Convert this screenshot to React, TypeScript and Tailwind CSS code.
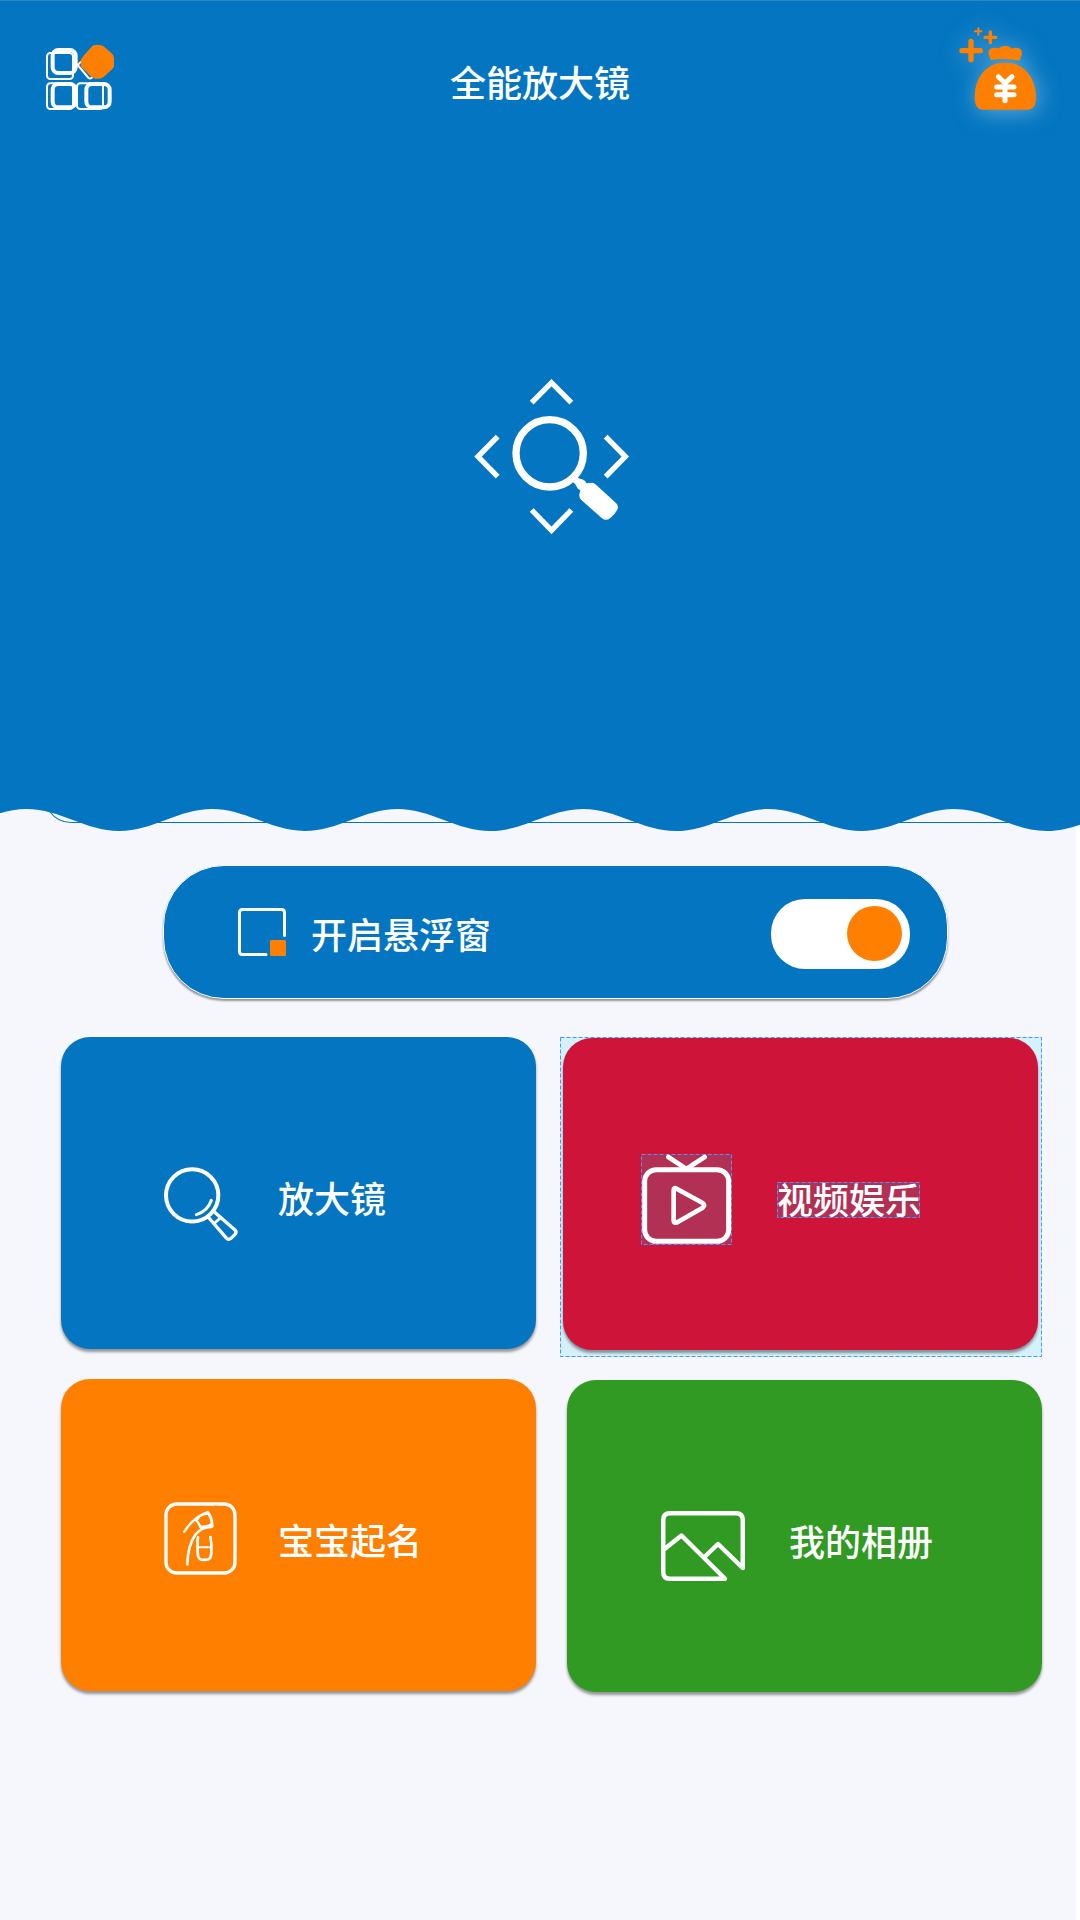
import type { ReactNode } from "react";

function wavePath() {
  const period = 185.5;
  const half = period / 2;
  const c = half * 0.3642;
  let x = 26.5 - period;
  let d = `M${x} 0 V3`;
  for (let i = 0; i < 14; i++) {
    const from = i % 2 === 0 ? 3 : 25;
    const to = i % 2 === 0 ? 25 : 3;
    d += ` C${x + c} ${from} ${x + half - c} ${to} ${x + half} ${to}`;
    x += half;
  }
  return `${d} V0 Z`;
}

function MenuIcon() {
  return (
    <svg className="size-[100px]" viewBox="0 0 300 300" fill="none" stroke="#fff">
      <g strokeWidth="6">
        <rect x="51" y="69" width="78" height="78" rx="10" />
        <rect x="51" y="160" width="78" height="77" rx="10" />
        <rect x="141" y="160" width="78" height="77" rx="10" />
        <path d="M154 94 L143 105 L175 143 Q181 148 187 142 L196 133" />
      </g>
      <g strokeWidth="12">
        <rect x="68" y="60" width="69" height="69" rx="17" />
        <rect x="68" y="162" width="69" height="70" rx="17" />
        <rect x="169" y="162" width="70" height="70" rx="17" />
      </g>
      <path
        d="M191 46 Q202 43 214 46 Q222 49 229 56 L245 70 Q252 76 252 84 L252 107 Q252 112 246 118 L222 140 Q215 146 206 146 L197 146 Q189 146 182 139 L160 117 Q152 110 152 102 L152 94 Q153 86 160 78 L181 55 Q186 49 191 46Z"
        fill="#ff8000"
        stroke="none"
      />
    </svg>
  );
}

function MoneyBagIcon() {
  return (
    <svg
      className="size-[120px] overflow-visible drop-shadow-[2px_2px_11px_rgba(190,225,245,0.5)]"
      viewBox="0 0 360 360"
      fill="none"
      strokeLinecap="round"
    >
      <g stroke="#ff8000">
        <path d="M66 122H121M93 94V149" strokeWidth="16" />
        <path d="M135 82H167M151 66V98" strokeWidth="10" />
        <path d="M105 64H124M115 55V74" strokeWidth="6" />
      </g>
      <g fill="#ff8000">
        <path d="M152 150 Q151 144 148 140 Q143 129 146 122 Q152 112 164 113 Q171 115 176 115 Q184 107 196 107 Q207 107 214 115 Q220 116 226 113 Q239 112 245 122 Q248 130 242 141 L239 152 Q196 143 152 150Z" />
        <path d="M172 160 Q195 156 219 160 Q244 167 264 189 Q288 219 288 262 Q288 299 263 299 L130 299 Q104 299 104 260 Q104 219 127 189 Q147 167 172 160Z" />
      </g>
      <path d="M175 200 L195 220 L216 200" stroke="#fff" strokeWidth="15" strokeLinejoin="round" />
      <path d="M170 231H222M170 254H222M195 223V272" stroke="#fff" strokeWidth="15" />
    </svg>
  );
}

function ScanIcon() {
  return (
    <svg className="size-[190px]" viewBox="0 0 570 570" fill="none" stroke="#fff">
      <g strokeWidth="16">
        <path d="M215 128 L274.500 68 L334 128" />
        <path d="M215 450 L274.500 511 L334 450" />
        <path d="M113 230 L54 289.500 L113 350" />
        <path d="M437 230 L496 289.500 L437 350" />
      </g>
      <circle cx="269" cy="280" r="101" strokeWidth="22" />
      <path
        d="M339 367 L353 352 Q359 358 367 358 Q375 361 380 370 L389 369 Q400 366 408 374 L468 429 Q477 438 472 449 Q464 464 450 475 Q438 484 426 475 L364 420 Q355 411 359 399 L361 391 Q352 387 349 379 Q347 371 339 367Z"
        fill="#fff"
        stroke="none"
      />
    </svg>
  );
}

function FloatWindowIcon() {
  return (
    <svg className="size-12" viewBox="0 0 48 48" fill="none">
      <path d="M46.500 27.500 V4.500 Q46.500 1.500 43.500 1.500 H4.500 Q1.500 1.500 1.500 4.500 V43.500 Q1.500 46.500 4.500 46.500 H28" stroke="#fff" strokeWidth="3" strokeLinecap="round" />
      <rect x="32" y="32" width="16" height="16" rx="1.500" fill="#ff8000" />
    </svg>
  );
}

function MagnifierIcon() {
  return (
    <svg className="size-[75px]" viewBox="342 410 225 225" fill="none" stroke="#fff" strokeLinejoin="round" strokeLinecap="round">
      <circle cx="426.500" cy="495" r="78.500" strokeWidth="12" />
      <path d="M484 510 Q473 543 439 553" strokeWidth="9" />
      <path d="M494 546 L555 599 Q561 605 555 612 L543 624 Q536 630 530 624 L477 563" strokeWidth="10" />
      <path d="M494 578 L511 563" strokeWidth="9" />
    </svg>
  );
}

function TvIcon() {
  return (
    <svg className="size-[91px]" viewBox="273 372 273 273" fill="none" stroke="#fff">
      <rect x="274.500" y="373.500" width="270" height="270" fill="#b23054" stroke="#3e9bff" strokeWidth="3" strokeDasharray="12 6" />
      <rect x="284" y="419" width="252" height="215" rx="35" strokeWidth="15" />
      <path d="M355 381 L409 417 L464 381" strokeWidth="14" strokeLinecap="round" />
      <path d="M371 481 Q371 471 380 476 L458 519 Q467 526 458 533 L382 577 Q371 581 371 572 Z" strokeWidth="14" strokeLinejoin="round" />
    </svg>
  );
}

function NameIcon() {
  return (
    <svg className="size-[73px]" viewBox="342 426 219 219" fill="none" stroke="#fff" strokeLinecap="round" strokeLinejoin="round">
      <rect x="348" y="432" width="207" height="207" rx="32" strokeWidth="10" />
      <path d="M403 515 Q434 467 473 457" strokeWidth="7" />
      <path d="M472 457 Q487 473 486 499" strokeWidth="9" />
      <path d="M436 479 Q447 488 452 503" strokeWidth="7" />
      <path d="M443 478 Q449 464 474 462" strokeWidth="5" />
      <path d="M452 501 Q466 501 484 494" strokeWidth="7" />
      <path d="M484 501 Q454 501 436 524 Q413 557 412 613" strokeWidth="8" />
      <path d="M444 532 Q442 546 443 576 Q443 597 454 599 Q466 601 475 598 Q484 594 484 575 Q486 550 481 531" strokeWidth="8" />
      <path d="M446 562 H482" strokeWidth="6" />
    </svg>
  );
}

function AlbumIcon() {
  return (
    <svg className="h-[70px] w-[84px]" viewBox="0 0 84 70" fill="none" stroke="#fff" strokeWidth="4.500" strokeLinejoin="round">
      <path d="M2.250 38.500 V9 Q2.250 2.250 9 2.250 H75 Q81.750 2.250 81.750 9 V57 L57 33 L43.500 46" />
      <path d="M2.250 39 L20.500 24.500 L64 67.750 H9 Q2.250 67.750 2.250 61 V36" />
    </svg>
  );
}

function Card({ className, children }: { className: string; children: ReactNode }) {
  return (
    <div className={`flex h-[312px] w-[475px] shrink-0 items-start rounded-[29px] shadow-[0_3px_3px_rgba(0,0,0,0.4)] ${className}`}>
      {children}
    </div>
  );
}

export default function App() {
  return (
    <main className="flex h-[1920px] w-[1080px] flex-col overflow-hidden bg-[linear-gradient(to_right,#f6f7fc_1076px,#ffffff_1076px)] font-['Noto_Sans_CJK_SC',sans-serif] text-[36px] leading-9 font-medium whitespace-nowrap text-white">
      <section className="flex h-[806px] shrink-0 flex-col border-t border-[#2a87c6] bg-[#0476c1]">
        <header className="flex items-start justify-between pr-5 pl-[30px]">
          <div className="mt-[29px]">
            <MenuIcon />
          </div>
          <h1 className="mt-[62px] ml-[10px]">全能放大镜</h1>
          <div className="mt-[9px]">
            <MoneyBagIcon />
          </div>
        </header>
        <div className="mt-[230px] ml-[460px]">
          <ScanIcon />
        </div>
      </section>
      <svg className="h-[26px] w-[1080px] shrink-0" viewBox="0 0 1080 26" fill="none">
        <path d="M50 6 Q58 16.500 71 16.500 H1040" stroke="#0476c1" strokeWidth="1.200" />
        <path d={wavePath()} fill="#0476c1" />
      </svg>

      <section className="mt-[33px] ml-[163px] flex h-[134px] w-[785px] shrink-0 items-center rounded-[61px] border border-white bg-[#0476c1] pr-[37px] pl-[74px] shadow-[0_2px_2px_rgba(0,0,0,0.4)]">
        <FloatWindowIcon />
        <span className="mt-px ml-[25px]">开启悬浮窗</span>
        <div className="mt-[3px] ml-auto flex h-[70px] w-[139px] items-center justify-end rounded-[34px] bg-white pr-2">
          <div className="size-[55px] rounded-full bg-[#ff8000]" />
        </div>
      </section>

      <section className="mt-[38px] ml-[61px] flex shrink-0 items-start">
        <Card className="bg-[#0476c1]">
          <div className="mt-[130px] ml-[103px]">
            <MagnifierIcon />
          </div>
          <span className="mt-[142px] ml-[39px]">放大镜</span>
        </Card>
        <div className="relative ml-6 h-[320px] w-[482px] bg-[#d4f1fc] pt-px pl-[3px]">
          <Card className="bg-[#ce1438]">
            <div className="mt-[116px] ml-[78px]">
              <TvIcon />
            </div>
            <div className="relative mt-[144px] ml-[45px] h-9 w-[143px] bg-[#b23054]">
              <svg className="absolute inset-0 size-full" fill="none">
                <rect x="0.500" y="0.500" width="142" height="35" stroke="#3e9bff" strokeDasharray="4 2" />
              </svg>
              <span className="relative -top-[2px]">视频娱乐</span>
            </div>
          </Card>
          <svg className="absolute inset-0 size-full" fill="none">
            <rect x="0.500" y="0.500" width="481" height="319" stroke="#3e9bff" strokeDasharray="4 2" />
          </svg>
        </div>
      </section>

      <section className="mt-[22px] ml-[61px] flex shrink-0 items-start">
        <Card className="bg-[#ff8000]">
          <div className="mt-[123px] ml-[103px]">
            <NameIcon />
          </div>
          <span className="mt-[142px] ml-[41px]">宝宝起名</span>
        </Card>
        <Card className="mt-px ml-[31px] bg-[#319a23]">
          <div className="mt-[131px] ml-[94px]">
            <AlbumIcon />
          </div>
          <span className="mt-[142px] ml-[44px]">我的相册</span>
        </Card>
      </section>
    </main>
  );
}
